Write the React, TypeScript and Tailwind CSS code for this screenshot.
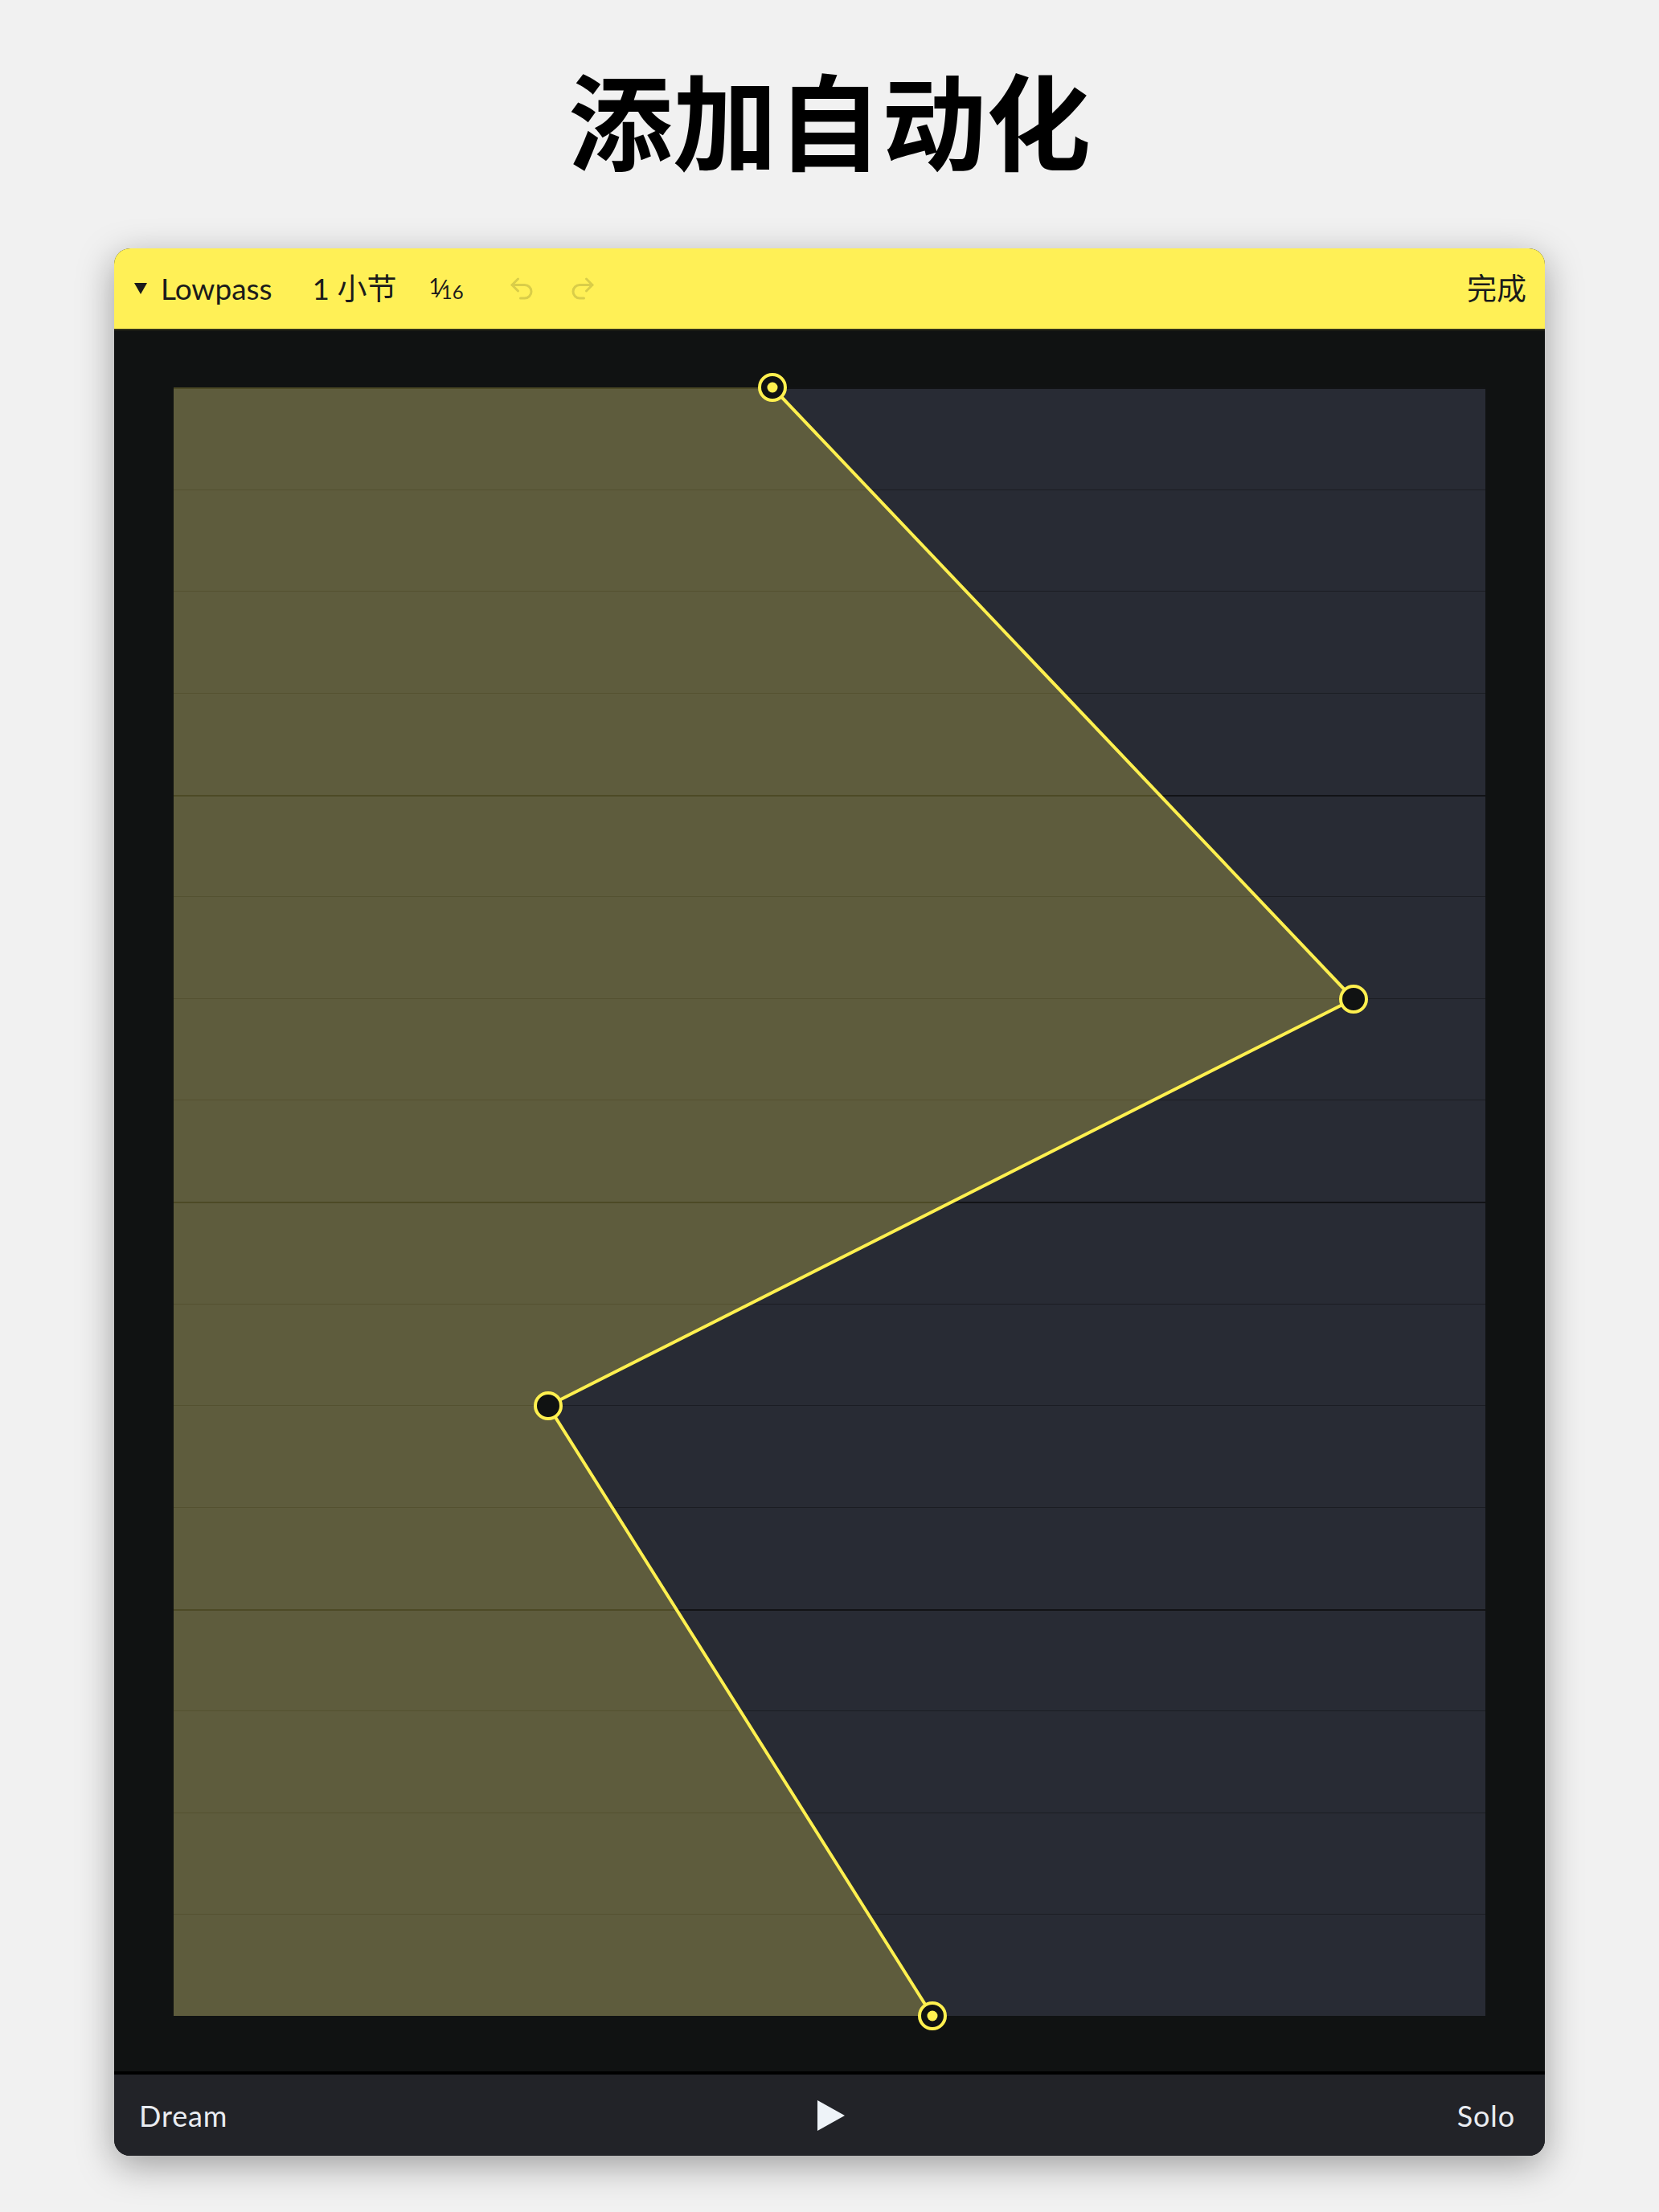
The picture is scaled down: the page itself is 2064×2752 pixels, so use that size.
import { Redo2, Undo2 } from "lucide-react";

const W = 1632;
const H = 2026;

const points = [
  { x: 745, y: 0, end: true },
  { x: 1468, y: 761, end: false },
  { x: 466, y: 1267, end: false },
  { x: 944, y: H, end: true },
];

const rows = Array.from({ length: 16 }, (_, i) => i);

function AutomationCurve() {
  const line = points.map((p) => `${p.x},${p.y}`).join(" ");
  const fill = `0,0 ${line} 0,${H}`;

  return (
    <svg
      className="absolute inset-0 h-full w-full overflow-visible"
      viewBox={`0 0 ${W} ${H}`}
    >
      <polygon points={fill} fill="#fff056" fillOpacity={0.25} />
      <polyline points={line} fill="none" stroke="#fff04f" strokeWidth={4} />
      {points.map((p) => (
        <g key={`${p.x}-${p.y}`}>
          <circle cx={p.x} cy={p.y} r={16} fill="#101212" stroke="#fff04f" strokeWidth={4} />
          {p.end && <circle cx={p.x} cy={p.y} r={6.5} fill="#fff04f" />}
        </g>
      ))}
    </svg>
  );
}

function Header() {
  return (
    <div className="flex h-[102px] items-center border-b-2 border-[#34331a] bg-[#fff056] pr-[23px] pl-[25px] text-[37px] text-[#1b1b1b]">
      <svg width="16" height="14" viewBox="0 0 16 14" className="mr-[17px]">
        <path d="M0 0h16L8 14z" fill="#1b1b1b" />
      </svg>
      <span>Lowpass</span>
      <span className="ml-[50px]">1 小节</span>
      <span className="ml-[40px] flex items-start leading-none">
        <span className="text-[26px]">1</span>
        <span className="-mx-[2px] text-[30px]">⁄</span>
        <span className="mt-[8px] text-[24px]">16</span>
      </span>
      <Undo2 className="ml-[54px] h-[36px] w-[36px] text-[#d9cd49]" strokeWidth={2} />
      <Redo2 className="ml-[40px] h-[36px] w-[36px] text-[#d9cd49]" strokeWidth={2} />
      <span className="ml-auto">完成</span>
    </div>
  );
}

function Footer() {
  return (
    <div className="flex h-[105px] items-center border-t-[4px] border-black bg-[#222328] pr-[37px] pl-[31px] text-[36px] tracking-wide text-[#e9ecf1]">
      <span className="flex-1">Dream</span>
      <svg width="34" height="38" viewBox="0 0 34 38" className="ml-[10px]">
        <path d="M0 0L34 19L0 38z" fill="#eef3f8" />
      </svg>
      <span className="flex-1 text-right">Solo</span>
    </div>
  );
}

export default function App() {
  return (
    <div
      className="flex min-h-[2752px] flex-col items-center bg-[#f1f1f1]"
      style={{ fontFamily: 'Lato, "Noto Sans CJK SC", sans-serif' }}
    >
      <h1
        className="pt-[80px] text-center text-[130px] leading-none font-bold text-black"
        style={{ fontFamily: '"Noto Sans CJK SC", sans-serif' }}
      >
        添加自动化
      </h1>
      <div className="mt-[99px] w-[1780px] overflow-hidden rounded-[20px] bg-[#101212] shadow-[0_12px_45px_rgba(0,0,0,0.35)]">
        <Header />
        <div className="px-[74px] pt-[71px] pb-[69px]">
          <div className="relative h-[2026px] bg-[#282b34]">
            <div className="grid h-full grid-rows-16">
              {rows.map((i) => (
                <div
                  key={i}
                  className={
                    i % 4 === 0
                      ? "border-t-2 border-[#121316]"
                      : "border-t border-[#1b1d23]"
                  }
                />
              ))}
            </div>
            <AutomationCurve />
          </div>
        </div>
        <Footer />
      </div>
    </div>
  );
}
